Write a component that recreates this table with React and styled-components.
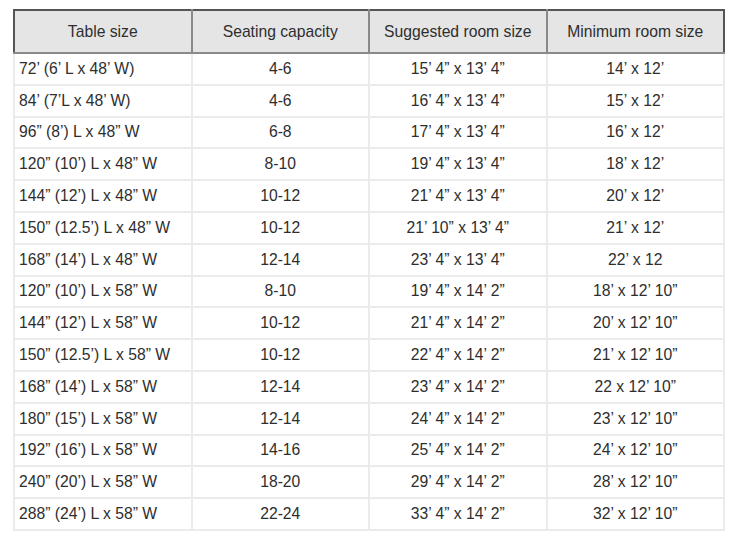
import styled, { createGlobalStyle } from 'styled-components';

const GlobalStyle = createGlobalStyle`
  body {
    margin: 0;
    background: #fff;
    font-family: 'Liberation Sans', Arial, sans-serif;
  }
`;

const rows = [
  ['72’ (6’ L x 48’ W)', '4-6', '15’ 4” x 13’ 4”', '14’ x 12’'],
  ['84’ (7’L x 48’ W)', '4-6', '16’ 4” x 13’ 4”', '15’ x 12’'],
  ['96” (8’) L x 48” W', '6-8', '17’ 4” x 13’ 4”', '16’ x 12’'],
  ['120” (10’) L x 48” W', '8-10', '19’ 4” x 13’ 4”', '18’ x 12’'],
  ['144” (12’) L x 48” W', '10-12', '21’ 4” x 13’ 4”', '20’ x 12’'],
  ['150” (12.5’) L x 48” W', '10-12', '21’ 10” x 13’ 4”', '21’ x 12’'],
  ['168” (14’) L x 48” W', '12-14', '23’ 4” x 13’ 4”', '22’ x 12'],
  ['120” (10’) L x 58” W', '8-10', '19’ 4” x 14’ 2”', '18’ x 12’ 10”'],
  ['144” (12’) L x 58” W', '10-12', '21’ 4” x 14’ 2”', '20’ x 12’ 10”'],
  ['150” (12.5’) L x 58” W', '10-12', '22’ 4” x 14’ 2”', '21’ x 12’ 10”'],
  ['168” (14’) L x 58” W', '12-14', '23’ 4” x 14’ 2”', '22 x 12’ 10”'],
  ['180” (15’) L x 58” W', '12-14', '24’ 4” x 14’ 2”', '23’ x 12’ 10”'],
  ['192” (16’) L x 58” W', '14-16', '25’ 4” x 14’ 2”', '24’ x 12’ 10”'],
  ['240” (20’) L x 58” W', '18-20', '29’ 4” x 14’ 2”', '28’ x 12’ 10”'],
  ['288” (24’) L x 58” W', '22-24', '33’ 4” x 14’ 2”', '32’ x 12’ 10”'],
];

const headers = ['Table size', 'Seating capacity', 'Suggested room size', 'Minimum room size'];

export default function App() {
  return (
    <Page>
      <GlobalStyle />
      <SizeTable>
        <thead>
          <tr>
            {headers.map((h) => (
              <HeadCell key={h}>{h}</HeadCell>
            ))}
          </tr>
        </thead>
        <tbody>
          {rows.map((row, i) => (
            <tr key={i}>
              {row.map((cell, j) => (
                <Cell key={j} $first={j === 0}>
                  {cell}
                </Cell>
              ))}
            </tr>
          ))}
        </tbody>
      </SizeTable>
    </Page>
  );
}

const Page = styled.div`
  padding: 9px 0 0 13px;
`;

const SizeTable = styled.table`
  width: 712px;
  border-collapse: collapse;
  table-layout: fixed;
  color: #2e2e2e;
  font-size: 15.7px;
`;

const HeadCell = styled.th`
  height: 41px;
  padding: 0;
  font-weight: 400;
  background: #e5e5e5;
  border: 2px solid #8a8a8a;
  border-top-color: #555;
  border-bottom-color: #8a8a8a;

  &:first-child {
    border-left-color: #555;
  }

  &:last-child {
    border-right-color: #555;
  }
`;

const Cell = styled.td`
  height: 29.8px;
  padding: 0 4px;
  border: 2px solid #ebebeb;
  text-align: ${(p) => (p.$first ? 'left' : 'center')};
  white-space: nowrap;
`;
